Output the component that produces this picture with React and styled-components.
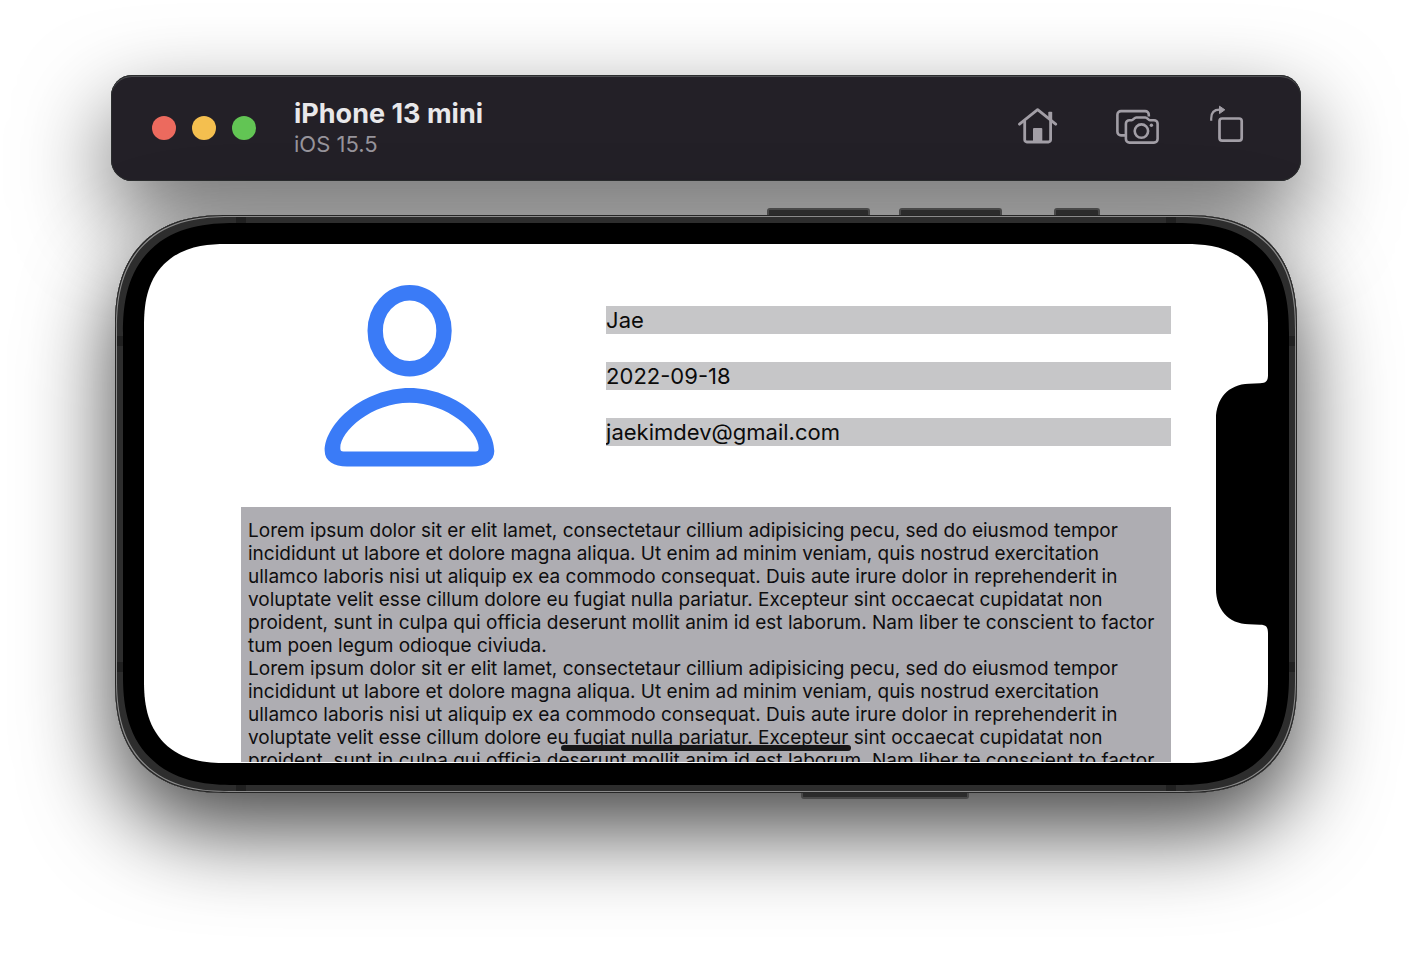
import React from "react";
import styled, { createGlobalStyle } from "styled-components";

const GlobalStyle = createGlobalStyle`
  *, *::before, *::after { box-sizing: border-box; }
  body {
    margin: 0;
    background: #fff;
    font-family: Inter, "Liberation Sans", sans-serif;
  }
`;

const Desktop = styled.main`
  display: flex;
  flex-direction: column;
  gap: 34px;
  padding: 75px 111px 160px;
`;

const TitleBar = styled.header`
  position: relative;
  display: flex;
  align-items: center;
  height: 106px;
  padding: 0 57px 0 41px;
  border-radius: 21px;
  background: #232027;
  box-shadow: inset 0 0 0 1px #2b2d2e, inset 0 2px 0 0 #4e4e52,
    0 36px 90px rgba(0, 0, 0, 0.6);
`;

const Lights = styled.div`
  display: flex;
  gap: 16px;
  margin-right: 38px;
`;

const Light = styled.button`
  width: 24px;
  height: 24px;
  padding: 0;
  border: 0;
  border-radius: 50%;
  background: ${(p) => p.$color};
`;

const Titles = styled.div`
  flex: 1;
  white-space: nowrap;
`;

const DeviceName = styled.h1`
  margin: 0;
  font-size: 27px;
  line-height: 32px;
  font-weight: 700;
  color: #e9e8ea;
`;

const DeviceOs = styled.p`
  margin: 0;
  font-size: 22px;
  line-height: 28px;
  color: #97949b;
`;

const Tools = styled.div`
  display: flex;
  gap: 50px;
`;

const ToolButton = styled.button`
  display: block;
  padding: 0;
  border: 0;
  background: none;
  color: #a29ea6;

  svg {
    display: block;
  }
`;

const Phone = styled.section`
  position: relative;
  margin: 0 4px;
  padding: 29px 29px 30px;
  border-radius: 102px;
  background: #000;
  box-shadow: inset 0 0 0 1px #262626, inset 0 0 0 2px #8a8a8a,
    inset 0 0 0 8px #2d2d2d, 0 36px 90px rgba(0, 0, 0, 0.74);

  @supports (corner-shape: superellipse(1.3)) {
    border-radius: 113px;
    corner-shape: superellipse(1.3);
  }
`;

const SideButton = styled.span`
  position: absolute;
  ${(p) => (p.$bottom ? "top: 100%;" : "bottom: 100%;")}
  left: ${(p) => p.$left}%;
  width: ${(p) => p.$width}px;
  height: ${(p) => (p.$bottom ? 6 : 7)}px;
  border: 2px solid #484848;
  ${(p) => (p.$bottom ? "border-top: 0;" : "border-bottom: 0;")}
  border-radius: ${(p) => (p.$bottom ? "0 0 3px 3px" : "3px 3px 0 0")};
  background: #2b2b2b;
`;

const bandSides = {
  top: "top: 2px; width: 10px; height: 6px;",
  bottom: "bottom: 2px; width: 10px; height: 6px;",
  left: "left: 2px; width: 6px; height: 10px;",
  right: "right: 2px; width: 6px; height: 10px;",
};

const Band = styled.span`
  position: absolute;
  ${(p) => bandSides[p.$side]}
  ${(p) => p.$from}: 121px;
  background: #202020;
`;

const Screen = styled.div`
  position: relative;
  overflow: hidden;
  padding: 41px 97px 1px;
  border-radius: 72px;
  background: #fff;

  @supports (corner-shape: superellipse(1.3)) {
    border-radius: 82px;
    corner-shape: superellipse(1.3);
  }
`;

const Profile = styled.div`
  display: grid;
  grid-template-columns: 37fr 62fr;
  align-items: center;
  gap: 28px;
  margin-bottom: 40px;
`;

const Portrait = styled.svg`
  display: block;
  justify-self: center;
`;

const Fields = styled.div`
  display: flex;
  flex-direction: column;
  gap: 28px;
`;

const Field = styled.input`
  width: 100%;
  height: 28px;
  padding: 0;
  border: 0;
  border-radius: 0;
  outline: 0;
  background: #c6c6c8;
  color: #0b0b0b;
  font: 400 22px/28px Inter, "Liberation Sans", sans-serif;
`;

const Notes = styled.textarea`
  display: block;
  width: 100%;
  height: 255px;
  padding: 12px 0 0 7px;
  border: 0;
  border-radius: 0;
  outline: 0;
  resize: none;
  overflow: hidden;
  white-space: pre;
  background: #aeadb2;
  color: #0e0e0f;
  font: 400 19px/23px Inter, "Liberation Sans", sans-serif;
`;

const Notch = styled.svg`
  position: absolute;
  top: 50%;
  right: 0;
  transform: translateY(-50%);
`;

const HomeIndicator = styled.span`
  position: absolute;
  bottom: 12px;
  left: 50%;
  width: 290px;
  height: 6px;
  margin-left: -145px;
  border-radius: 3px;
  background: #161617;
`;

const lorem = [
  "Lorem ipsum dolor sit er elit lamet, consectetaur cillium adipisicing pecu, sed do eiusmod tempor",
  "incididunt ut labore et dolore magna aliqua. Ut enim ad minim veniam, quis nostrud exercitation",
  "ullamco laboris nisi ut aliquip ex ea commodo consequat. Duis aute irure dolor in reprehenderit in",
  "voluptate velit esse cillum dolore eu fugiat nulla pariatur. Excepteur sint occaecat cupidatat non",
  "proident, sunt in culpa qui officia deserunt mollit anim id est laborum. Nam liber te conscient to factor",
  "tum poen legum odioque civiuda.",
];
const notes = [...lorem, ...lorem.slice(0, 5)].join("\n");

const HomeIcon = () => (
  <svg width="48" height="46" viewBox="0 0 48 46" fill="none" stroke="currentColor" strokeWidth="2.8" strokeLinecap="round" strokeLinejoin="round">
    <path d="M1.5 19.2 19.6 4.6 37.7 19.2" />
    <path d="M6.7 16V34.8a2.2 2.2 0 0 0 2.2 2.2H30.4a2.2 2.2 0 0 0 2.2-2.2V16" />
    <path d="M30.3 12.500V7.500a.8.8 0 0 1 .8-.8H33.4a.8.8 0 0 1 .8.8V16Z" fill="currentColor" stroke="none" />
    <path d="M15 37V24a1 1 0 0 1 1-1H23.300a1 1 0 0 1 1 1V37Z" fill="currentColor" stroke="none" />
  </svg>
);

const CameraIcon = () => (
  <svg width="44" height="46" viewBox="0 0 44 46" fill="none" stroke="currentColor" strokeWidth="2.600" strokeLinecap="butt" strokeLinejoin="round">
    <path d="M9 30.400H5A3.600 3.600 0 0 1 1.400 26.800V9.700A3.600 3.600 0 0 1 5 6.100H29.200A3.600 3.600 0 0 1 32.800 9.700V11.500" />
    <path d="M13.500 15.200H15.600C17.400 15.200 18.200 12.500 20.300 12.500H29.300C31.400 12.500 32.200 15.200 34 15.200H38A3.600 3.600 0 0 1 41.600 18.800V34A3.600 3.600 0 0 1 38 37.600H13.500A3.600 3.600 0 0 1 9.900 34V18.800A3.600 3.600 0 0 1 13.500 15.200Z" />
    <circle cx="25.400" cy="26.100" r="6.700" />
    <circle cx="35.400" cy="20.300" r="1.700" fill="currentColor" stroke="none" />
  </svg>
);

const RotateIcon = () => (
  <svg width="34" height="46" viewBox="0 0 34 46" fill="none" stroke="currentColor" strokeWidth="2.700" strokeLinejoin="round">
    <rect x="9.500" y="13.500" width="22.200" height="22.200" rx="2.600" />
    <path d="M1.200 15.800V13.500C1.200 8 4 4.700 9.500 4.700" strokeWidth="2.200" />
    <path d="M9.500 1.200 14.800 4.800 9.500 8.600Z" fill="currentColor" strokeWidth="1" />
  </svg>
);

const PersonIcon = () => (
  <Portrait width="171" height="182" viewBox="0 0 171 182" role="img" aria-label="Profile picture">
    <ellipse cx="85.600" cy="45.800" rx="34.400" ry="38" fill="none" stroke="#3a7bf7" strokeWidth="15.400" />
    <path
      fill="#3a7bf7"
      fillRule="evenodd"
      d="M85.500 102.900C131 102.900 170.300 138 170.300 166C170.300 176 161 181.500 148 181.500H23C10 181.500.7 176 .7 166C.7 138 40 102.900 85.500 102.900ZM85.500 117.800C48 117.800 16.300 146 16.300 163C16.300 165.500 17 166.500 19.500 166.500H151.500C154 166.500 154.700 165.500 154.700 163C154.700 146 123 117.800 85.500 117.800Z"
    />
  </Portrait>
);

export default function App() {
  return (
    <>
      <GlobalStyle />
      <Desktop>
        <TitleBar>
          <Lights>
            <Light $color="#ec6a5e" aria-label="Close" />
            <Light $color="#f4bf4f" aria-label="Minimize" />
            <Light $color="#62c554" aria-label="Zoom" />
          </Lights>
          <Titles>
            <DeviceName>iPhone 13 mini</DeviceName>
            <DeviceOs>iOS 15.5</DeviceOs>
          </Titles>
          <Tools>
            <ToolButton aria-label="Home"><HomeIcon /></ToolButton>
            <ToolButton aria-label="Screenshot"><CameraIcon /></ToolButton>
            <ToolButton aria-label="Rotate"><RotateIcon /></ToolButton>
          </Tools>
        </TitleBar>

        <Phone>
          <SideButton $left={55.2} $width={103} />
          <SideButton $left={66.3} $width={103} />
          <SideButton $left={79.4} $width={46} />
          <SideButton $left={58} $width={168} $bottom />
          {["top", "bottom"].map((side) => (
            <React.Fragment key={side}>
              <Band $side={side} $from="left" />
              <Band $side={side} $from="right" />
            </React.Fragment>
          ))}
          {["left", "right"].map((side) => (
            <React.Fragment key={side}>
              <Band $side={side} $from="top" />
              <Band $side={side} $from="bottom" />
            </React.Fragment>
          ))}
          <Screen>
            <Profile>
              <PersonIcon />
              <Fields>
                <Field aria-label="Name" defaultValue="Jae" />
                <Field aria-label="Date" defaultValue="2022-09-18" />
                <Field aria-label="Email" defaultValue="jaekimdev@gmail.com" />
              </Fields>
            </Profile>
            <Notes aria-label="Notes" defaultValue={notes} spellCheck={false} />
            <Notch width="52" height="258" viewBox="0 0 52 258" aria-hidden="true">
              <path d="M52 0V258C52 252 50 249.800 44 249.800L33 249.300C12 248.800 0 234 0 214V44C0 24 12 9.200 33 8.700L44 8.200C50 8.200 52 6 52 0Z" />
            </Notch>
            <HomeIndicator />
          </Screen>
        </Phone>
      </Desktop>
    </>
  );
}
